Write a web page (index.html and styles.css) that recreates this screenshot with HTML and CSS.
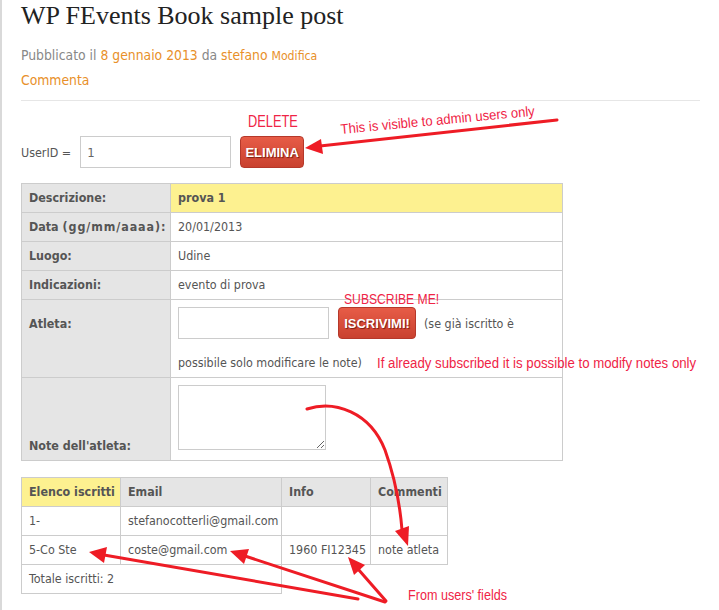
FILE: index.html
```html
<!DOCTYPE html>
<html lang="it">
<head>
<meta charset="utf-8">
<title>WP FEvents Book sample post</title>
<link rel="stylesheet" href="styles.css">
</head>
<body>
<div class="page">
  <h1 class="title">WP FEvents Book sample post</h1>
  <div class="meta meta-first">Pubblicato il <a class="link">8 gennaio 2013</a> da <a class="link">stefano</a> <a class="link small">Modifica</a></div>
  <div class="meta"><a class="link">Commenta</a></div>
  <hr class="sep">

  <form class="userform">
    <span>UserID =</span>
    <input class="field" type="text" value="1">
    <button class="btn btn-del" type="button">ELIMINA</button>
  </form>

  <table class="event">
    <colgroup><col class="c-lab"><col></colgroup>
    <tr><td class="lab">Descrizione:</td><td class="hl"><b>prova 1</b></td></tr>
    <tr><td class="lab">Data <span class="wide">(gg/mm/aaaa):</span></td><td>20/01/2013</td></tr>
    <tr><td class="lab">Luogo:</td><td>Udine</td></tr>
    <tr><td class="lab">Indicazioni:</td><td>evento di prova</td></tr>
    <tr><td class="lab">Atleta:</td><td class="atl"><input class="field f-atl" type="text"><button class="btn btn-sub" type="button">ISCRIVIMI!</button>(se già iscritto è<br>possibile solo modificare le note)</td></tr>
    <tr><td class="lab">Note dell'atleta:</td><td class="atl"><textarea class="notes"></textarea></td></tr>
  </table>

  <table class="subs">
    <colgroup><col class="s1"><col class="s2"><col class="s3"><col class="s4"></colgroup>
    <tr><td class="lab hl">Elenco iscritti</td><td class="lab">Email</td><td class="lab">Info</td><td class="lab">Commenti</td></tr>
    <tr><td>1-</td><td>stefanocotterli@gmail.com</td><td></td><td></td></tr>
    <tr><td>5-Co Ste</td><td>coste@gmail.com</td><td>1960 FI12345</td><td>note atleta</td></tr>
    <tr><td colspan="2">Totale iscritti: 2</td></tr>
  </table>

  <span class="note n-delete">DELETE</span>
  <span class="note n-admin">This is visible to admin users only</span>
  <span class="note n-sub">SUBSCRIBE ME!</span>
  <span class="note n-already">If already subscribed it is possible to modify notes only</span>
  <span class="note n-from">From users' fields</span>

  <svg class="arrows" width="719" height="610" viewBox="0 0 719 610">
    <g fill="none" stroke="#ee1c25" stroke-width="3" stroke-linecap="round">
      <line x1="557" y1="120" x2="320" y2="146"/>
      <path d="M307,409 C335,400 370,412 385,450 C395,478 400,505 402,530"/>
      <line x1="358" y1="599" x2="104" y2="555"/>
      <line x1="385" y1="602" x2="245" y2="556"/>
      <line x1="386" y1="601" x2="358" y2="569"/>
    </g>
    <g fill="#ee1c25">
      <polygon points="305,148 321,139 323,154"/>
      <polygon points="408,546 395,531 409,526"/>
      <polygon points="89,552 107,547 104,563"/>
      <polygon points="230,551 249,549 244,564"/>
      <polygon points="348,557 365,565 354,575"/>
    </g>
  </svg>
</div>
</body>
</html>
```

FILE: styles.css
```css
html, body {
  margin: 0;
  padding: 0;
  background: #fff;
}

.page {
  position: relative;
  box-sizing: border-box;
  width: 719px;
  height: 610px;
  overflow: hidden;
  border-left: 2px solid #d9d9d9;
  padding: 0 19px 0 19px;
  font-family: "DejaVu Sans Condensed", "DejaVu Sans", sans-serif;
  font-size: 12.4px;
  color: #555;
}

.title {
  margin: 0;
  font-family: "Liberation Serif", serif;
  font-weight: 400;
  font-size: 26px;
  line-height: 31px;
  color: #222;
}

.meta {
  font-size: 13.8px;
  line-height: 24px;
  color: #888;
}

.meta-first {
  margin-top: 12px;
}

.link {
  color: #e8902a;
  text-decoration: none;
}

.small {
  font-size: 12.2px;
}

.sep {
  margin: 8px 0 0;
  border: 0;
  border-top: 1px solid #e6e6e6;
  height: 0;
}

.userform {
  display: flex;
  align-items: baseline;
  gap: 9px;
  margin: 35px 0 0;
}

.field {
  box-sizing: border-box;
  width: 151px;
  height: 32px;
  margin: 0;
  padding: 0 6px;
  border: 1px solid #cccccc;
  background: #fff;
  font-family: "DejaVu Sans Condensed", "DejaVu Sans", sans-serif;
  font-size: 13px;
  color: #666;
}

.btn {
  box-sizing: border-box;
  height: 32px;
  margin: 0;
  padding: 0;
  border: 1px solid #b5382a;
  border-radius: 4px;
  background: linear-gradient(#e75c47, #c9412f);
  color: #fff;
  font-family: "Liberation Sans", Arial, sans-serif;
  font-weight: 700;
  font-size: 13px;
  text-shadow: 1px 1px 1px #7a1d12;
}

.btn-del {
  width: 64px;
}

.btn-sub {
  width: 78px;
  margin-right: 8px;
}

.event,
.subs {
  border-collapse: collapse;
  table-layout: fixed;
}

.event {
  width: 542px;
  margin-top: 15px;
}

.c-lab {
  width: 149px;
}

.subs {
  width: 426px;
  margin-top: 16px;
}

.s1 { width: 99px; }
.s2 { width: 161px; }
.s3 { width: 89px; }
.s4 { width: 77px; }

td {
  border: 1px solid #cccccc;
  padding: 6px 6px 6px 7px;
  line-height: 16px;
  vertical-align: baseline;
  text-align: left;
  white-space: nowrap;
}

.lab {
  background: #e5e5e5;
  font-weight: 700;
  color: #555;
}

.wide {
  letter-spacing: 0.9px;
}

.hl {
  background: #fdf190;
}

.atl {
  padding-top: 7px;
}

.f-atl {
  margin: 0 9px 16px 0;
}

.notes {
  box-sizing: border-box;
  display: inline-block;
  width: 148px;
  height: 65px;
  margin: 0;
  border: 1px solid #cccccc;
  vertical-align: baseline;
}

.note {
  position: absolute;
  white-space: nowrap;
  font-family: "Liberation Sans", Arial, sans-serif;
  line-height: 1;
  color: #ef2446;
  transform-origin: 0 0;
}

.n-delete {
  left: 246px;
  top: 114px;
  font-size: 16px;
  transform: scaleX(0.8);
}

.n-sub {
  left: 342px;
  top: 291px;
  font-size: 15px;
  transform: scaleX(0.81);
}

.n-already {
  left: 375px;
  top: 356px;
  font-size: 14px;
  transform: scaleX(0.945);
}

.n-from {
  left: 406px;
  top: 588px;
  font-size: 14px;
  transform: scaleX(0.9);
}

.n-admin {
  left: 339px;
  top: 122px;
  font-size: 14px;
  transform-origin: 0 12px;
  transform: rotate(-5.4deg) scaleX(0.935);
}

.arrows {
  position: absolute;
  left: -2px;
  top: 0;
  pointer-events: none;
}
```
